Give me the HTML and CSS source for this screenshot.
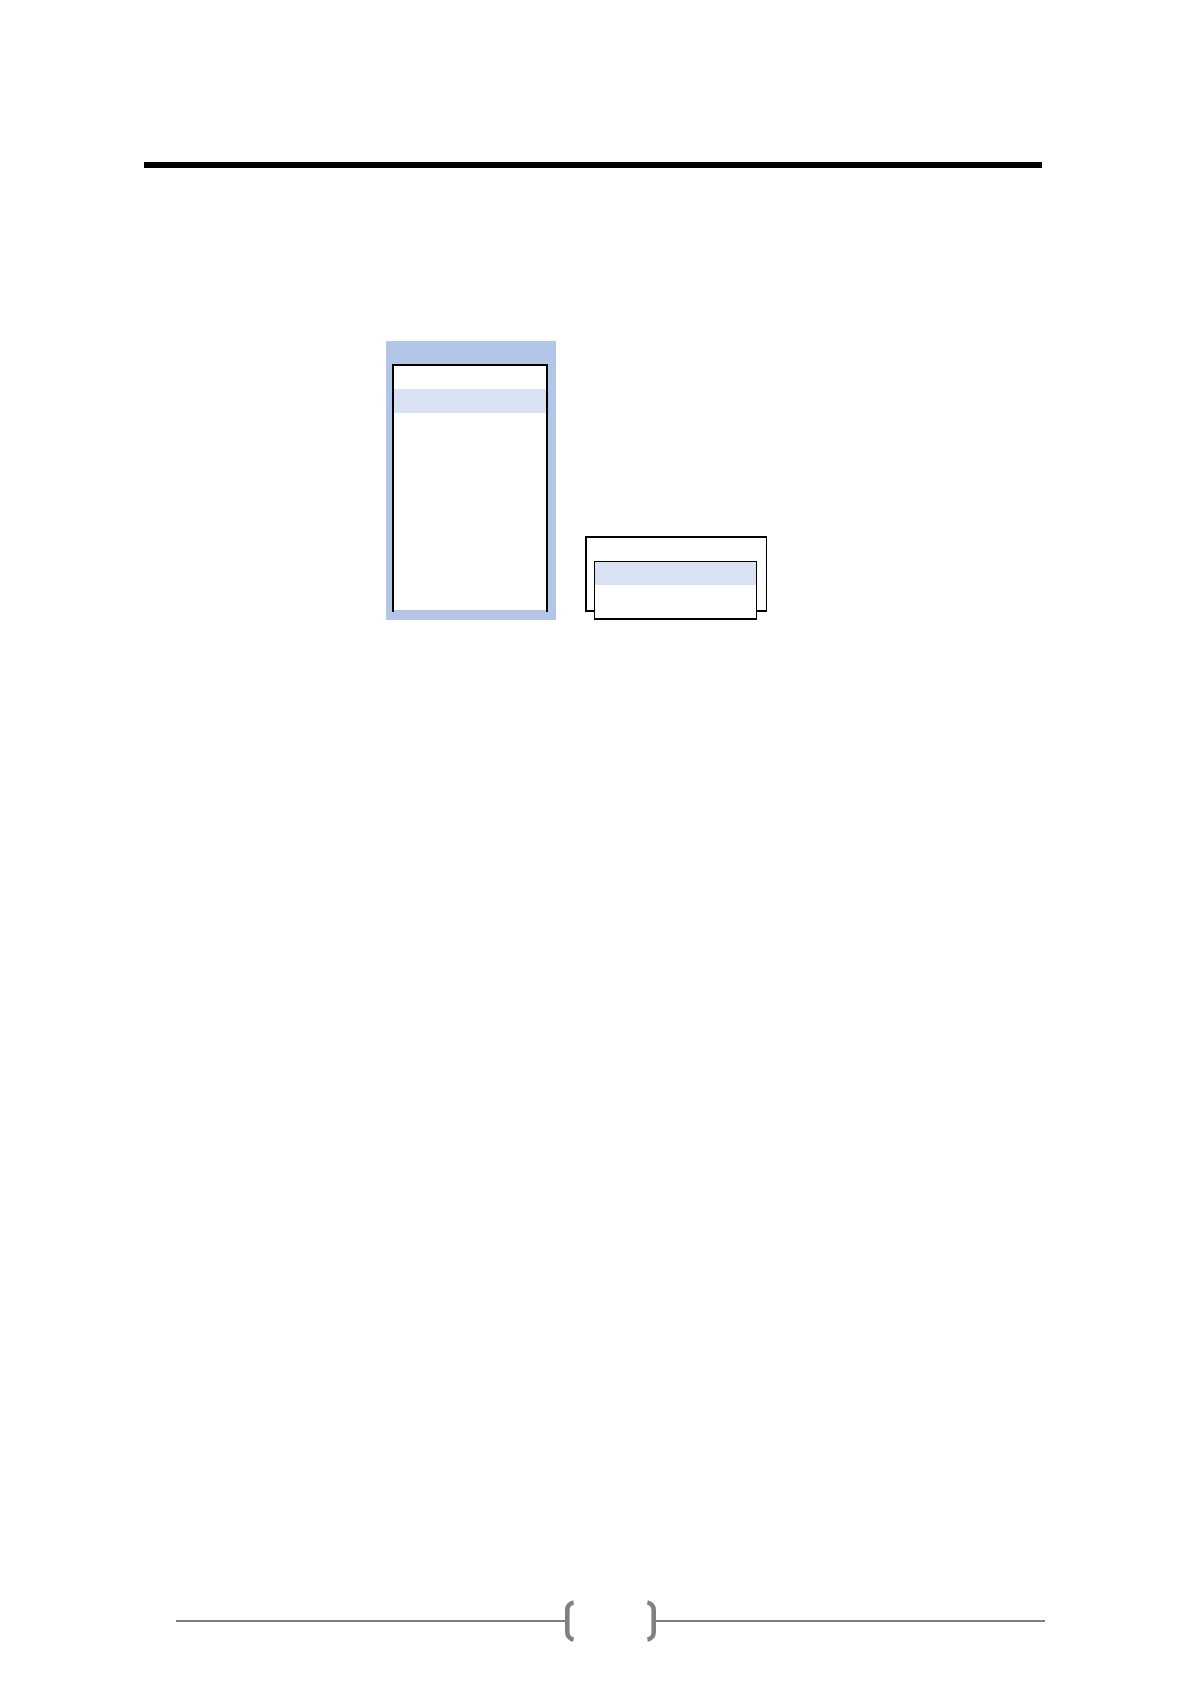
FILE: index.html
```
<!DOCTYPE html>
<html lang="en">
<head>
    <meta charset="UTF-8">
    <meta name="viewport" content="width=device-width, initial-scale=1.0">
    <title>Menu Diagram</title>
    <link rel="stylesheet" href="styles.css">
</head>
<body>
    <header class="page-header"></header>

    <main class="diagram">
        <div class="panel">
            <div class="panel-list">
                <div class="row"></div>
                <div class="row selected"></div>
                <div class="row rest"></div>
            </div>
        </div>
        <div class="box">
            <div class="submenu">
                <div class="row selected"></div>
            </div>
        </div>
    </main>

    <footer class="page-footer">
        <div class="line"></div>
        <svg class="bracket" width="91" height="42" viewBox="0 0 91 42" fill="none" stroke="#808080" stroke-width="4.6">
            <path d="M8.6 2.4 C5 3 2.3 6 2.3 10 V32 C2.3 36 5 39 8.6 39.6"/>
            <path d="M82.4 2.4 C86 3 88.7 6 88.7 10 V32 C88.7 36 86 39 82.4 39.6"/>
        </svg>
        <div class="line"></div>
    </footer>
</body>
</html>
```
FILE: styles.css
```
* {
    box-sizing: border-box;
}
body {
    margin: 0;
    padding: 162px 146px 42px 144px;
    min-height: 100vh;
    display: flex;
    flex-direction: column;
    background: white;
    font-family: "Liberation Sans", Arial, sans-serif;
}
.page-header {
    height: 6px;
    margin-right: 3px;
    background: black;
}
.diagram {
    display: flex;
    justify-content: center;
    align-items: flex-end;
    gap: 29px;
    margin-top: 173px;
    padding-right: 36px;
}
.panel {
    width: 170px;
    padding: 23px 8px 8px 6px;
    background: #b4c6e7;
}
/* the side lines run 2px past the last row */
.panel-list {
    border: 2px solid black;
    border-bottom: none;
    padding-bottom: 2px;
}
.row {
    height: 23px;
    background: white;
}
.row.selected {
    background: #d9e2f3;
}
.panel-list .selected {
    height: 24px;
}
.row.rest {
    height: 197px;
}
.box {
    position: relative;
    width: 182px;
    height: 76px;
    margin-bottom: 8px;
    border: 2px solid black;
    border-right-width: 1px;
}
.submenu {
    position: absolute;
    top: 23px;
    left: 7px;
    right: 9px;
    bottom: -10px;
    border: 1px solid black;
    border-bottom-width: 2px;
    background: white;
}
.page-footer {
    display: flex;
    align-items: center;
    margin-top: auto;
    margin-left: 32px;
}
.line {
    flex: 1;
    height: 2px;
    background: #808080;
}
```
